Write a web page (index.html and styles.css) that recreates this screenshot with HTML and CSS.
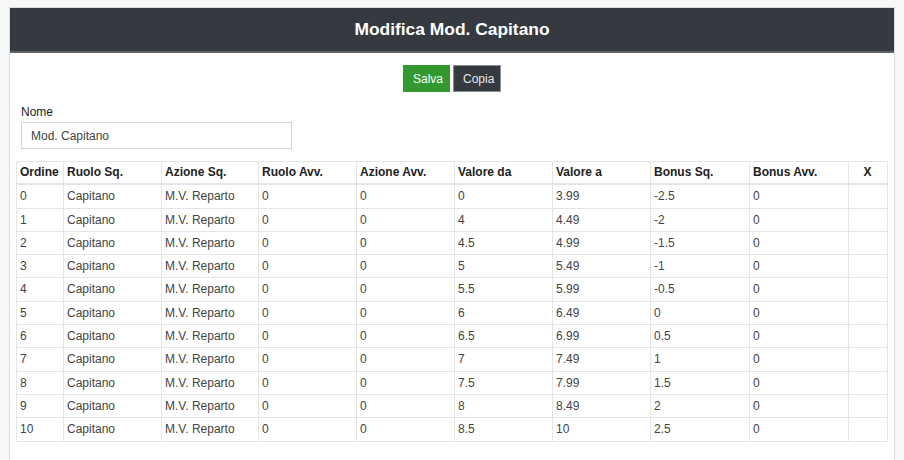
FILE: index.html
```html
<!DOCTYPE html>
<html>
<head>
<meta charset="UTF-8">
<title>Modifica Mod. Capitano</title>
<link rel="stylesheet" href="styles.css">
</head>
<body>
	<div class="pagina">
		<div class="scheda">
			<h1 class="titolo">Modifica Mod. Capitano</h1>
			<div class="pulsanti">
				<button class="btn btn_salva">Salva</button>
				<button class="btn btn_copia">Copia</button>
			</div>
			<div class="campo">
				<label for="nome">Nome</label>
				<input id="nome" type="text" value="Mod. Capitano">
			</div>
			<table class="tabella">
				<colgroup>
					<col style="width:47px"><col style="width:98px"><col style="width:97px"><col style="width:98px"><col style="width:98px">
					<col style="width:98px"><col style="width:98px"><col style="width:99px"><col style="width:99px"><col style="width:39px">
				</colgroup>
				<thead>
					<tr>
						<th>Ordine</th><th>Ruolo Sq.</th><th>Azione Sq.</th><th>Ruolo Avv.</th><th>Azione Avv.</th>
						<th>Valore da</th><th>Valore a</th><th>Bonus Sq.</th><th>Bonus Avv.</th><th class="centro">X</th>
					</tr>
				</thead>
				<tbody>
					<tr><td>0</td><td>Capitano</td><td>M.V. Reparto</td><td>0</td><td>0</td><td>0</td><td>3.99</td><td>-2.5</td><td>0</td><td></td></tr>
					<tr><td>1</td><td>Capitano</td><td>M.V. Reparto</td><td>0</td><td>0</td><td>4</td><td>4.49</td><td>-2</td><td>0</td><td></td></tr>
					<tr><td>2</td><td>Capitano</td><td>M.V. Reparto</td><td>0</td><td>0</td><td>4.5</td><td>4.99</td><td>-1.5</td><td>0</td><td></td></tr>
					<tr><td>3</td><td>Capitano</td><td>M.V. Reparto</td><td>0</td><td>0</td><td>5</td><td>5.49</td><td>-1</td><td>0</td><td></td></tr>
					<tr><td>4</td><td>Capitano</td><td>M.V. Reparto</td><td>0</td><td>0</td><td>5.5</td><td>5.99</td><td>-0.5</td><td>0</td><td></td></tr>
					<tr><td>5</td><td>Capitano</td><td>M.V. Reparto</td><td>0</td><td>0</td><td>6</td><td>6.49</td><td>0</td><td>0</td><td></td></tr>
					<tr><td>6</td><td>Capitano</td><td>M.V. Reparto</td><td>0</td><td>0</td><td>6.5</td><td>6.99</td><td>0.5</td><td>0</td><td></td></tr>
					<tr><td>7</td><td>Capitano</td><td>M.V. Reparto</td><td>0</td><td>0</td><td>7</td><td>7.49</td><td>1</td><td>0</td><td></td></tr>
					<tr><td>8</td><td>Capitano</td><td>M.V. Reparto</td><td>0</td><td>0</td><td>7.5</td><td>7.99</td><td>1.5</td><td>0</td><td></td></tr>
					<tr><td>9</td><td>Capitano</td><td>M.V. Reparto</td><td>0</td><td>0</td><td>8</td><td>8.49</td><td>2</td><td>0</td><td></td></tr>
					<tr><td>10</td><td>Capitano</td><td>M.V. Reparto</td><td>0</td><td>0</td><td>8.5</td><td>10</td><td>2.5</td><td>0</td><td></td></tr>
				</tbody>
			</table>
		</div>
	</div>
</body>
</html>
```

FILE: styles.css
```css
html, body
{
	margin : 0;
	background : #f7f8f9;
}

body
{
	font : 12px "Liberation Sans", Arial, sans-serif;
	color : #333;
}

.pagina
{
	padding : 7px 9px 0 9px;
}

.scheda
{
	background : #fff;
	border : 1px solid #dcdcdc;
	padding-bottom : 20px;
}

.titolo
{
	margin : 0;
	height : 43px;
	line-height : 43px;
	background : #343a40;
	border-bottom : 2px solid #5b6168;
	color : #fff;
	font-size : 17.4px;
	font-weight : bold;
	text-align : center;
}

.pulsanti
{
	display : flex;
	justify-content : center;
	gap : 3px;
	margin-top : 12px;
}

.btn
{
	font : 12px "Liberation Sans", Arial, sans-serif;
	height : 27px;
	padding : 0 9px;
	border : 1px solid transparent;
	border-radius : 0;
	color : #fff;
}

.btn_salva
{
	background : #33992f;
	border-color : #33992f;
	width : 47px;
}

.btn_copia
{
	background : #343a40;
	border-color : #8a8e93;
	color : #e8e8e8;
	width : 48px;
}

.campo
{
	margin : 13px 0 0 11px;
}

.campo label
{
	display : block;
	margin-bottom : 3px;
	color : #222;
}

.campo input
{
	box-sizing : border-box;
	width : 271px;
	height : 27px;
	padding : 0 9px;
	border : 1px solid #ced4da;
	font : 12px "Liberation Sans", Arial, sans-serif;
	color : #444;
}

.tabella
{
	margin : 12px 0 0 6px;
	width : 871px;
	table-layout : fixed;
	border-collapse : collapse;
}

.tabella th, .tabella td
{
	border : 1px solid #e3e5e8;
	padding : 4px 4px 4px 3px;
	line-height : 14.3px;
	text-align : left;
	white-space : nowrap;
	overflow : hidden;
}

.tabella th
{
	padding-top : 3px;
	border-bottom : 2px solid #e3e5e8;
	color : #222;
	font-weight : bold;
}

.tabella td
{
	color : #444;
}

.tabella th.centro
{
	text-align : center;
}
```
